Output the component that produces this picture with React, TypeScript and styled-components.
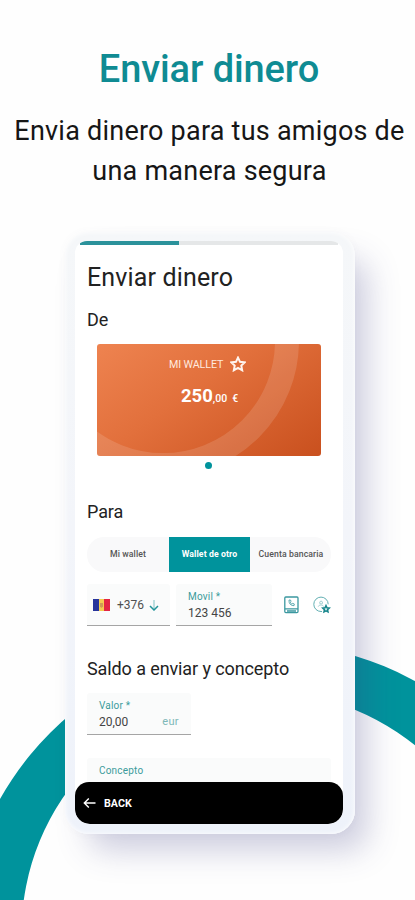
import React from "react";
import styled, { createGlobalStyle } from "styled-components";

const teal = "#00939c";

const GlobalStyle = createGlobalStyle`
  * { box-sizing: border-box; }
  body { margin: 0; background: #fff; font-family: Roboto, "Liberation Sans", sans-serif; }
`;

const Poster = styled.main`
  position: relative;
  width: 415px;
  height: 900px;
  overflow: hidden;
  background: #fefefe;
  display: flex;
  flex-direction: column;
  align-items: center;
`;

const Backdrop = styled.svg`
  position: absolute;
  inset: 0;
`;

const Headline = styled.h1`
  margin: 47px 0 0;
  font-size: 38px;
  line-height: 44px;
  font-weight: 500;
  letter-spacing: -0.1px;
  color: #0f8b93;
  padding-left: 3px;
`;

const Tagline = styled.p`
  margin: 20px 0 0;
  width: 415px;
  padding-left: 4px;
  text-align: center;
  white-space: nowrap;
  font-size: 27px;
  line-height: 40px;
  letter-spacing: 0.23px;
  color: #161616;
`;

const Phone = styled.section`
  position: relative;
  width: 290px;
  height: 602px;
  margin: 41px 0 0 5px;
  padding: 9px 12px 10px 10px;
  border-radius: 24px;
  background: linear-gradient(180deg, #f5f7f9 0%, #f3f5fa 50%, #eef2fa 100%);
  box-shadow: 18px 22px 32px -6px rgba(62, 62, 130, 0.26), inset 0 0 5px #fff, 0 0 8px rgba(90, 100, 140, 0.04);
`;

const Screen = styled.div`
  width: 268px;
  height: 583px;
  border-radius: 12px 12px 15px 15px;
  overflow: hidden;
  background: #fff;
  display: flex;
  flex-direction: column;
`;

const Progress = styled.div`
  height: 4px;
  flex: none;
  margin: 0 5px;
  background: linear-gradient(90deg, #2b929b 99px, #e5e7e8 99px);
`;

const Content = styled.div`
  height: 537px;
  flex: none;
  padding: 0 12px;
  color: #222;
`;

const ScreenTitle = styled.h2`
  margin: 17px 0 0;
  font-size: 25px;
  line-height: 32px;
  font-weight: 400;
  letter-spacing: 0.15px;
`;

const SectionTitle = styled.h3<{ $top: number }>`
  margin: ${(p) => p.$top}px 0 0;
  font-size: 18px;
  line-height: 24px;
  font-weight: 400;
  letter-spacing: -0.1px;
  white-space: nowrap;
`;

const WalletCard = styled.div`
  position: relative;
  width: 224px;
  height: 112px;
  margin: 12px 0 0 10px;
  padding-top: 11px;
  border-radius: 3px;
  overflow: hidden;
  color: #fff;
  background: linear-gradient(145deg, #ee8350 0%, #e2703c 42%, #c9501e 100%);
`;

const CardArc = styled.svg`
  position: absolute;
  inset: 0;
`;

const CardName = styled.div`
  position: relative;
  display: flex;
  align-items: center;
  height: 18px;
  gap: 7px;
  padding-left: 72px;
  font-size: 10.7px;
  color: #ffe9df;
  letter-spacing: -0.1px;
`;

const Amount = styled.div`
  position: relative;
  display: flex;
  align-items: baseline;
  margin-top: 11px;
  padding-left: 84px;
  font-size: 18.5px;
  line-height: 24px;
  font-weight: 700;
`;

const Cents = styled.span`
  font-size: 10.5px;
  font-weight: 500;
  white-space: pre;
`;

const PageDot = styled.div`
  width: 7px;
  height: 7px;
  margin: 6px 0 0 118px;
  border-radius: 50%;
  background: ${teal};
`;

const Tabs = styled.div`
  display: grid;
  grid-template-columns: 82px 81px 82px;
  height: 35px;
  margin-top: 13px;
  border-radius: 17px;
  overflow: hidden;
  background: #f9f9fa;
`;

const Tab = styled.div<{ $active?: boolean }>`
  display: flex;
  align-items: center;
  justify-content: center;
  padding-bottom: 1px;
  white-space: nowrap;
  font-size: 8.7px;
  letter-spacing: 0.1px;
  font-weight: ${(p) => (p.$active ? 700 : 500)};
  color: ${(p) => (p.$active ? "#fff" : "#555")};
  background: ${(p) => (p.$active ? teal : "transparent")};
`;

const PhoneRow = styled.div`
  display: flex;
  margin-top: 12px;
`;

const Field = styled.div<{ $width: number; $gap?: number }>`
  width: ${(p) => p.$width}px;
  height: 42px;
  margin-right: ${(p) => p.$gap ?? 0}px;
  padding: 5px 12px 0;
  border-bottom: 1px solid #a5a5a5;
  border-radius: 3px 3px 0 0;
  background: #fafbfb;
`;

const PrefixField = styled(Field)`
  display: flex;
  align-items: center;
  padding: 0 0 0 6px;
  font-size: 12px;
  color: #505050;
`;

const Prefix = styled.span`
  width: 32px;
  margin-left: 7px;
`;

const Label = styled.div`
  font-size: 10px;
  line-height: 15px;
  letter-spacing: 0.2px;
  color: #3c9c9c;
`;

const Value = styled.div`
  display: flex;
  justify-content: space-between;
  font-size: 12px;
  line-height: 18px;
  color: #444;
`;

const Currency = styled.span`
  font-size: 11px;
  letter-spacing: 0.4px;
  color: #7eb8b8;
`;

const RowIcon = styled.div<{ $left: number }>`
  margin: 12px 0 0 ${(p) => p.$left}px;
  height: 20px;
`;

const ValueField = styled(Field)`
  margin-top: 12px;
`;

const ConceptField = styled(Field)`
  margin-top: 23px;
`;

const BackBar = styled.button`
  flex: none;
  display: flex;
  align-items: center;
  gap: 8px;
  width: 268px;
  height: 42px;
  padding: 0 8px;
  border: 0;
  border-radius: 14px;
  background: #000;
  color: #fff;
  font: 700 10.7px Roboto, sans-serif;
`;

const Flag = () => (
  <svg width="17" height="12" viewBox="0 0 17 12">
    <path fill="#27349b" d="M0 0h6v12H0z" />
    <path fill="#f5cc51" d="M6 0h5v12H6z" />
    <path fill="#e32543" d="M11 0h6v12h-6z" />
    <path fill="#cf9c55" d="M7 4h3v3.5L8.5 9 7 7.5z" />
  </svg>
);

const DownArrow = () => (
  <svg width="10" height="12" viewBox="0 0 10 12" fill="none">
    <path d="M5 1V11" stroke="#7fc2c4" strokeWidth="1" />
    <path d="M1 7l4 4 4-4" stroke="#219499" strokeWidth="1.5" />
  </svg>
);

const Contacts = () => (
  <svg width="15" height="18" viewBox="0 0 15 18" fill="none" stroke="#3b98a0" strokeWidth="1.3">
    <rect x=".8" y="1" width="13.2" height="15.6" rx="1" />
    <path d="M1 12.8h13M3 15h9" />
    <path d="M5 4c-.3 3.5 1.5 5.6 5 5.7L10.3 8 8.7 7.3l-.8.9C7 7.7 6.5 7 6.3 6.2l.8-.6L6.5 4z" strokeWidth=".8" />
  </svg>
);

const Favorite = () => (
  <svg width="18" height="18" viewBox="0 0 18 18" fill="none" stroke="#63b0b3">
    <path d="M9 15.5H8A7.2 7.2 0 1 1 15.2 8.3" strokeWidth="1" />
    <path d="M5.3 10.5c.5-2 4.7-2 5.3 0M6.8 6a1.4 1.4 0 1 0 2.6 0 1.4 1.4 0 0 0-2.6 0" strokeWidth=".6" />
    <path fill="#d8eeee" stroke="#16858b" strokeWidth="1.5" d="M13 9.6l1 2.1 2.3.3-1.7 1.6.4 2.3-2-1.1-2 1.1.4-2.3L9.7 12l2.3-.3z" />
  </svg>
);

const Star = () => (
  <svg width="16" height="16" viewBox="0 0 15 15" fill="none" stroke="#fff4ee" strokeWidth="1.9">
    <path d="M7.5 1.5l1.9 4 4.4.5-3.2 3 .8 4.4-3.9-2.2-3.9 2.2.8-4.4-3.2-3 4.4-.5z" />
  </svg>
);

const BackArrow = () => (
  <svg width="13" height="12" viewBox="0 0 13 12" fill="none" stroke="#fff" strokeWidth="1.4">
    <path d="M12.5 6H1.5M5.8 1.5L1.3 6l4.5 4.5" />
  </svg>
);

export default function App() {
  return (
    <>
      <GlobalStyle />
      <Poster>
        <Backdrop width="415" height="900">
          <path
            fill={teal}
            fillRule="evenodd"
            d="M-39.5 949.5a306.5 306.5 0 1 1 613 0a306.5 306.5 0 1 1-613 0zM21.5 933a241.5 241.5 0 1 0 483 0a241.5 241.5 0 1 0-483 0z"
          />
        </Backdrop>
        <Headline>Enviar dinero</Headline>
        <Tagline>
          Envia dinero para tus amigos de
          <br />
          una manera segura
        </Tagline>
        <Phone>
          <Screen>
            <Progress />
            <Content>
              <ScreenTitle>Enviar dinero</ScreenTitle>
              <SectionTitle $top={14}>De</SectionTitle>
              <WalletCard>
                <CardArc width="224" height="112">
                  <circle cx="66" cy="-3" r="124" fill="none" stroke="#fff" strokeOpacity=".13" strokeWidth="24" />
                </CardArc>
                <CardName>
                  MI WALLET <Star />
                </CardName>
                <Amount>
                  250<Cents>{",00  €"}</Cents>
                </Amount>
              </WalletCard>
              <PageDot />
              <SectionTitle $top={31}>Para</SectionTitle>
              <Tabs>
                <Tab>Mi wallet</Tab>
                <Tab $active>Wallet de otro</Tab>
                <Tab>Cuenta bancaria</Tab>
              </Tabs>
              <PhoneRow>
                <PrefixField $width={84} $gap={6}>
                  <Flag />
                  <Prefix>+376</Prefix>
                  <DownArrow />
                </PrefixField>
                <Field $width={97}>
                  <Label>Movil *</Label>
                  <Value>123 456</Value>
                </Field>
                <RowIcon $left={12}>
                  <Contacts />
                </RowIcon>
                <RowIcon $left={14}>
                  <Favorite />
                </RowIcon>
              </PhoneRow>
              <SectionTitle $top={31}>Saldo a enviar y concepto</SectionTitle>
              <ValueField $width={104}>
                <Label>Valor *</Label>
                <Value>
                  20,00 <Currency>eur</Currency>
                </Value>
              </ValueField>
              <ConceptField $width={244}>
                <Label>Concepto</Label>
              </ConceptField>
            </Content>
            <BackBar>
              <BackArrow />
              BACK
            </BackBar>
          </Screen>
        </Phone>
      </Poster>
    </>
  );
}
